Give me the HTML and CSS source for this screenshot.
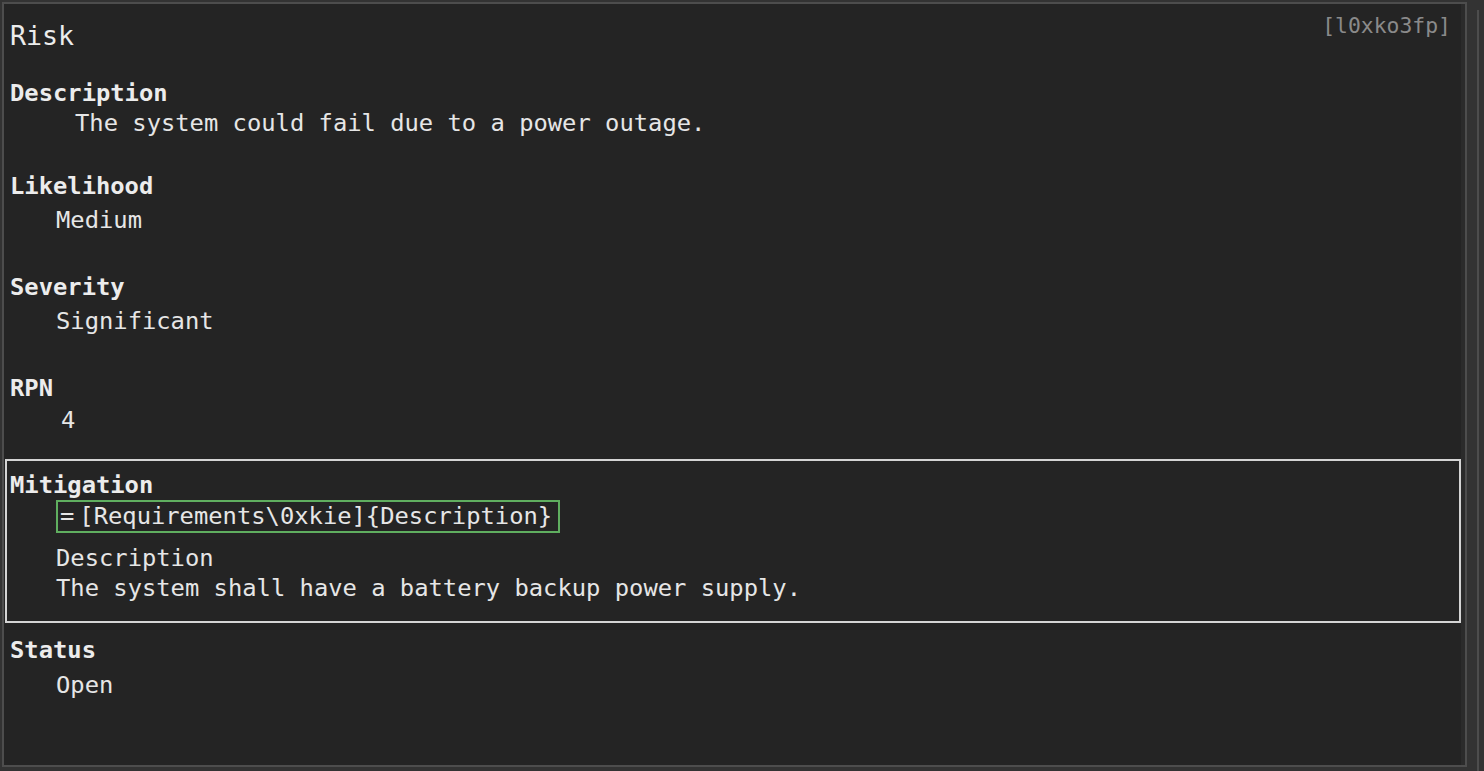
FILE: index.html
```html
<!DOCTYPE html>
<html lang="en">
<head>
<meta charset="utf-8">
<title>Risk</title>
<link rel="stylesheet" href="styles.css">
</head>
<body>
<div class="window">
  <div class="frame">
    <div class="panel">
      <div class="tag">[l0xko3fp]</div>
      <h1 class="title">Risk</h1>

      <section class="field field-desc">
        <div class="label">Description</div>
        <div class="value value-para">The system could fail due to a power outage.</div>
      </section>

      <section class="field field-gap">
        <div class="label">Likelihood</div>
        <div class="value value-spaced">Medium</div>
      </section>

      <section class="field field-gap2">
        <div class="label">Severity</div>
        <div class="value value-spaced">Significant</div>
      </section>

      <section class="field field-gap2">
        <div class="label">RPN</div>
        <div class="value value-num">4</div>
      </section>

      <section class="field field-box">
        <div class="label">Mitigation</div>
        <div class="formula"><span class="eq">=</span><span class="ref">[Requirements\0xkie]{Description}</span></div>
        <div class="value value-sub">Description</div>
        <div class="value value-tight">The system shall have a battery backup power supply.</div>
      </section>

      <section class="field field-after">
        <div class="label">Status</div>
        <div class="value value-open">Open</div>
      </section>
    </div>
    <div class="gutter"></div>
  </div>
  <div class="side"></div>
</div>
</body>
</html>
```

FILE: styles.css
```css
html, body {
  margin: 0;
  padding: 0;
  background: #333333;
}

body {
  width: 1484px;
  height: 771px;
  overflow: hidden;
  font-family: "DejaVu Sans Mono", "Liberation Mono", monospace;
  color: #e6e6e6;
}

.window {
  display: flex;
  height: 771px;
  box-sizing: border-box;
  padding: 2px 0 0 2px;
}

.frame {
  display: flex;
  width: 1465px;
  height: 765px;
  box-sizing: border-box;
  border: 2px solid #4d4d4d;
}

.panel {
  position: relative;
  flex: 1;
  background: #242424;
  padding-top: 16px;
  display: flex;
  flex-direction: column;
}

.gutter {
  width: 4px;
  background: #2b2b2b;
}

.side {
  width: 2px;
  margin-left: 10px;
  margin-top: 8px;
  background: #4d4d4d;
}

.tag {
  position: absolute;
  top: 8px;
  right: 10px;
  font-size: 21.4px;
  line-height: 28px;
  color: #8a8a8a;
}

.title {
  margin: 0;
  padding-left: 6px;
  font-size: 26.6px;
  font-weight: normal;
  line-height: 32px;
  color: #ececec;
}

.field {
  padding-left: 6px;
}

.label {
  font-size: 23.8px;
  line-height: 28px;
  font-weight: bold;
  color: #ececec;
}

.value {
  font-size: 23.8px;
  line-height: 28px;
  padding-left: 46px;
  white-space: pre;
}

.field-desc { margin-top: 27px; }
.field-gap { margin-top: 35px; }
.field-gap2 { margin-top: 39px; }

.value-para {
  margin-top: 2px;
  padding-left: 65px;
}

.value-spaced { margin-top: 6px; }

.value-num {
  margin-top: 4px;
  padding-left: 51px;
}

.field-box {
  margin: 25px 0 0 1px;
  border: 2px solid #d4d4d4;
  padding: 10px 0 19px 3px;
}

.formula {
  display: flex;
  align-items: center;
  width: max-content;
  margin: 1px 0 0 46px;
  height: 33px;
  box-sizing: border-box;
  border: 2px solid #5fae5f;
  padding: 0 6px 0 2px;
  font-size: 23.8px;
  line-height: 29px;
}

.eq {
  margin-right: 5px;
}

.ref {
  white-space: pre;
}

.value-sub { margin-top: 11px; }
.value-tight { margin-top: 2px; }

.field-after { margin-top: 13px; }
.value-open { margin-top: 7px; }
```
